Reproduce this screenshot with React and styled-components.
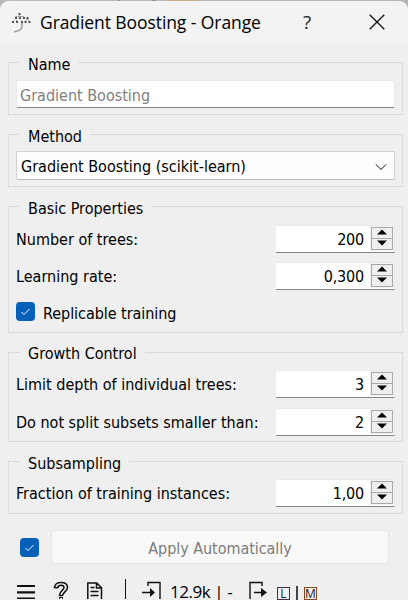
import React from 'react';
import styled, { createGlobalStyle } from 'styled-components';

const Global = createGlobalStyle`
  * { box-sizing: border-box; }
  html, body { margin: 0; padding: 0; background: #efefef; }
  body { width: 408px; height: 600px; overflow: hidden; }
`;

const Backdrop = styled.div`
  width: 408px;
  height: 600px;
  padding-top: 1px;
  background: linear-gradient(90deg, #b9b9b9 0 118px, #8f949b 118px 120px, #b9b9b9 120px 152px, #8f949b 152px 156px, #b9b9b9 156px 166px, #c9a98c 166px 198px, #b5b5b5 198px);
  font-family: "DejaVu Sans Condensed", "DejaVu Sans", "Noto Sans", sans-serif;
  font-stretch: condensed;
  font-size: 16px;
  color: #000;
`;

const Window = styled.div`
  display: flex;
  flex-direction: column;
  height: 599px;
  border-radius: 9px 9px 0 0;
  background: #efefef;
`;

const TitleBar = styled.header`
  display: flex;
  align-items: center;
  flex: none;
  height: 43px;
  padding-left: 12px;
  border-radius: 9px 9px 0 0;
  background: #f3f3f3;
  svg { flex: none; }
`;

const Title = styled.h1`
  flex: none;
  width: 258px;
  margin: -2px 0 0 8px;
  font: 400 17.5px/24px "Open Sans", "Noto Sans", sans-serif;
  letter-spacing: -0.08px;
  white-space: nowrap;
`;

const TitleButton = styled.button`
  display: flex;
  flex: none;
  align-items: center;
  justify-content: center;
  width: ${(p) => p.$width}px;
  height: 40px;
  margin: -2px 0 0 ${(p) => p.$gap || 0}px;
  padding: 0;
  border: 0;
  background: none;
  color: #222;
  font: 400 19px/24px "Open Sans", "Noto Sans", sans-serif;
`;

const Content = styled.main`
  display: flex;
  flex-direction: column;
  gap: 9px;
  padding: 8px 5px 0 8px;
`;

const Group = styled.fieldset`
  height: ${(p) => p.$height}px;
  min-width: 0;
  margin: 0;
  padding: ${(p) => p.$top}px 7px 0 7px;
  border: 1px solid #dadada;
`;

const Legend = styled.legend`
  height: 21px;
  margin-left: 4px;
  padding: 0 8px;
  line-height: ${(p) => p.$line || 25}px;
  white-space: nowrap;
`;

const NameField = styled.div`
  height: 28px;
  padding-left: 3px;
  border: 1px solid #e9e9e9;
  border-bottom: 1px solid #858585;
  border-radius: 2px;
  background: #fff;
  color: #808080;
  line-height: 29px;
`;

const Combo = styled.div`
  display: flex;
  align-items: center;
  justify-content: space-between;
  height: 29px;
  padding: 2px 7px 0 4px;
  border: 1px solid #d0d0d0;
  border-bottom-color: #bcbcbc;
  border-radius: 2px;
  background: #fdfdfd;
`;

const Row = styled.div`
  display: flex;
  align-items: center;
  justify-content: space-between;
  height: 28px;
  margin-bottom: ${(p) => p.$gap || 0}px;
`;

const Label = styled.span`
  line-height: 29px;
  white-space: nowrap;
`;

const Spin = styled.div`
  display: flex;
  align-items: center;
  width: 119px;
  height: 28px;
  padding: 0 1px 0 0;
  border-top: 1px solid #e9e9e9;
  border-right: 1px solid #e9e9e9;
  border-bottom: 1px solid #858585;
  background: #fff;
`;

const SpinValue = styled.span`
  flex: 1;
  padding-right: 7px;
  line-height: 29px;
  text-align: right;
  letter-spacing: -0.2px;
`;

const Steps = styled.div`
  display: flex;
  flex-direction: column;
  width: 22px;
  height: 23px;
  margin-top: -2px;
  border: 1px solid #a8a8a8;
  background: #efefef;
  outline: 1px solid #f3f3f3;
`;

const Step = styled.div`
  display: flex;
  align-items: center;
  justify-content: center;
  height: ${(p) => (p.$down ? 11 : 10)}px;
  padding-bottom: 2px;
  border-top: ${(p) => (p.$down ? '1px solid #a8a8a8' : '0')};
  svg { display: block; }
`;

const CheckBox = styled.span`
  display: flex;
  align-items: center;
  justify-content: center;
  flex: none;
  width: 19px;
  height: 19px;
  border-radius: 4px;
  background: #0560b8;
`;

const CheckRow = styled.div`
  display: flex;
  align-items: flex-start;
  gap: 8px;
  height: 24px;
  padding-top: 3px;
  letter-spacing: -0.05px;
  ${Label} { line-height: 23px; }
`;

const ApplyRow = styled.div`
  display: flex;
  flex: none;
  align-items: center;
  gap: 12px;
  height: 34px;
  margin: 16px 19px 0 20px;
`;

const ApplyButton = styled.button`
  flex: 1;
  height: 34px;
  padding: 3px 0 0;
  border: 1px solid #e5e5e5;
  border-radius: 4px;
  background: #f9f9f9;
  color: #7c7c7c;
  font: inherit;
  letter-spacing: -0.05px;
`;

const StatusBar = styled.footer`
  display: flex;
  flex: none;
  align-items: flex-start;
  height: 35px;
  padding: 15px 0 0 17px;
  svg { display: block; flex: none; }
`;

const Separator = styled.div`
  flex: none;
  width: 1px;
  height: 20px;
  margin: 0 16px 0 22px;
  background: #111;
`;

const StatusText = styled.span`
  flex: none;
  width: 79px;
  height: 14px;
  margin: 6px 0 0 9px;
  font: 400 17px/14px "Open Sans", "Noto Sans", sans-serif;
  letter-spacing: -0.45px;
  white-space: nowrap;
`;

const OutputText = styled.span`
  display: flex;
  align-items: center;
  gap: 6px;
  margin: 7px 0 0 10px;
`;

const Boxed = styled.span`
  display: flex;
  justify-content: center;
  width: 13px;
  height: 13px;
  border: 1px solid ${(p) => p.$color};
  color: #222;
  font: 400 12px/12px "Open Sans", "Noto Sans", sans-serif;
`;

const Bar = styled.span`
  width: 2px;
  height: 14px;
  background: #444;
`;

function BoostingIcon() {
  return (
    <svg width="20" height="22" viewBox="0 0 20 22" fill="none">
      <path d="M7.500 2v3M3.500 4.500h8M4 4v3M7.500 4v3M11.500 4v3M2.500 8L1 10M4 8l2 2M15.500 6l-2 4M15.500 6l2 4M10 8.500v4" stroke="#aaa" />
      <path d="M10 11v3c0 4-3 4.500-8 6" stroke="#999" strokeWidth="1.400" />
      <path d="M6.500 1h2v2h-2zM3 5h2v2H3zM7 5h2v2H7zM11 5h2v2h-2zM0 9h2v2H0zM4 9h2v2H4zM9 9h2v2H9zM12.500 9h2v2h-2zM16.500 9h2v2h-2zM14.500 5h2v2h-2z" fill="#555" />
    </svg>
  );
}

function Check() {
  return (
    <svg width="11" height="9" viewBox="0 0 11 9" fill="none">
      <path d="M1.500 5l2.500 2.500L9.500 2" stroke="#fff" strokeWidth="1" />
    </svg>
  );
}

function SpinBox({ value }) {
  return (
    <Spin>
      <SpinValue>{value}</SpinValue>
      <Steps>
        <Step><svg width="10" height="6" viewBox="0 0 10 6"><path d="M0 5.500L5 0.500l5 5z" /></svg></Step>
        <Step $down><svg width="10" height="6" viewBox="0 0 10 6"><path d="M0 .5h10l-5 5z" /></svg></Step>
      </Steps>
    </Spin>
  );
}

function Field({ label, value, gap }) {
  return (
    <Row $gap={gap}>
      <Label>{label}</Label>
      <SpinBox value={value} />
    </Row>
  );
}

export default function App() {
  return (
    <>
      <Global />
      <Backdrop>
        <Window>
          <TitleBar>
            <BoostingIcon />
            <Title>Gradient Boosting - Orange</Title>
            <TitleButton $width={18}>?</TitleButton>
            <TitleButton $width={60} $gap={31}>
              <svg width="16" height="16" viewBox="0 0 16 16"><path d="M.7.7l14.600 14.600M15.300.7L.7 15.300" stroke="#111" strokeWidth="1.300" /></svg>
            </TitleButton>
          </TitleBar>
          <Content>
            <Group $height={63} $top={7}>
              <Legend>Name</Legend>
              <NameField>Gradient Boosting</NameField>
            </Group>
            <Group $height={63} $top={6}>
              <Legend>Method</Legend>
              <Combo>
                <span>Gradient Boosting (scikit-learn)</span>
                <svg width="12" height="8" viewBox="0 0 12 8" fill="none"><path d="M.8 1.300L6 6.500l5.200-5.200" stroke="#666" strokeWidth="1.100" /></svg>
              </Combo>
            </Group>
            <Group $height={137} $top={8}>
              <Legend>Basic Properties</Legend>
              <Field label="Number of trees:" value="200" gap={9} />
              <Field label="Learning rate:" value="0,300" gap={9} />
              <CheckRow>
                <CheckBox><Check /></CheckBox>
                <Label>Replicable training</Label>
              </CheckRow>
            </Group>
            <Group $height={100} $top={7}>
              <Legend $line={23}>Growth Control</Legend>
              <Field label="Limit depth of individual trees:" value="3" gap={10} />
              <Field label="Do not split subsets smaller than:" value="2" />
            </Group>
            <Group $height={63} $top={7}>
              <Legend>Subsampling</Legend>
              <Field label="Fraction of training instances:" value="1,00" />
            </Group>
          </Content>
          <ApplyRow>
            <CheckBox><Check /></CheckBox>
            <ApplyButton>Apply Automatically</ApplyButton>
          </ApplyRow>
          <StatusBar>
            <svg width="18" height="20" viewBox="0 0 18 20"><path d="M0 7h18M0 13.300h18M0 19.500h18" stroke="#111" strokeWidth="2.200" /></svg>
            <svg width="50" height="20" viewBox="0 0 50 20" fill="none">
              <path d="M19.500 8.500c.5-3.500 3-5 6.500-5 4 0 6.500 2 6.500 5 0 4-4.500 4.500-5 8h-3c0-5 4.500-5 4.500-8 0-1.500-1-2.300-3-2.300s-3 .8-3.300 2.600z" stroke="#111" strokeWidth="1.500" />
              <path d="M24.500 18.500h3v2h-3z" stroke="#111" />
            </svg>
            <svg width="18" height="20" viewBox="0 0 18 20" fill="none">
              <path d="M2.800 20V4h9l4.700 4.700V20M11.500 4v5h5M5.500 8.500h4M5.500 12.500h8M5.500 16.500h8" stroke="#111" strokeWidth="1.500" />
            </svg>
            <Separator />
            <svg width="19" height="20" viewBox="0 0 19 20" fill="none">
              <path d="M6 7V3.500h12V20M0 13.500h12" stroke="#111" strokeWidth="1.400" /><path d="M8 9l5 4.500L8 18z" fill="#111" />
            </svg>
            <StatusText>12.9k | -</StatusText>
            <svg width="18" height="20" viewBox="0 0 18 20" fill="none">
              <path d="M13 7V3.500H1V20M5 13.500h10" stroke="#111" strokeWidth="1.400" /><path d="M12 9l6 4.500-6 4.500z" fill="#111" />
            </svg>
            <OutputText><Boxed $color="#40304f">L</Boxed><Bar /><Boxed $color="#8a4a20">M</Boxed></OutputText>
          </StatusBar>
        </Window>
      </Backdrop>
    </>
  );
}
